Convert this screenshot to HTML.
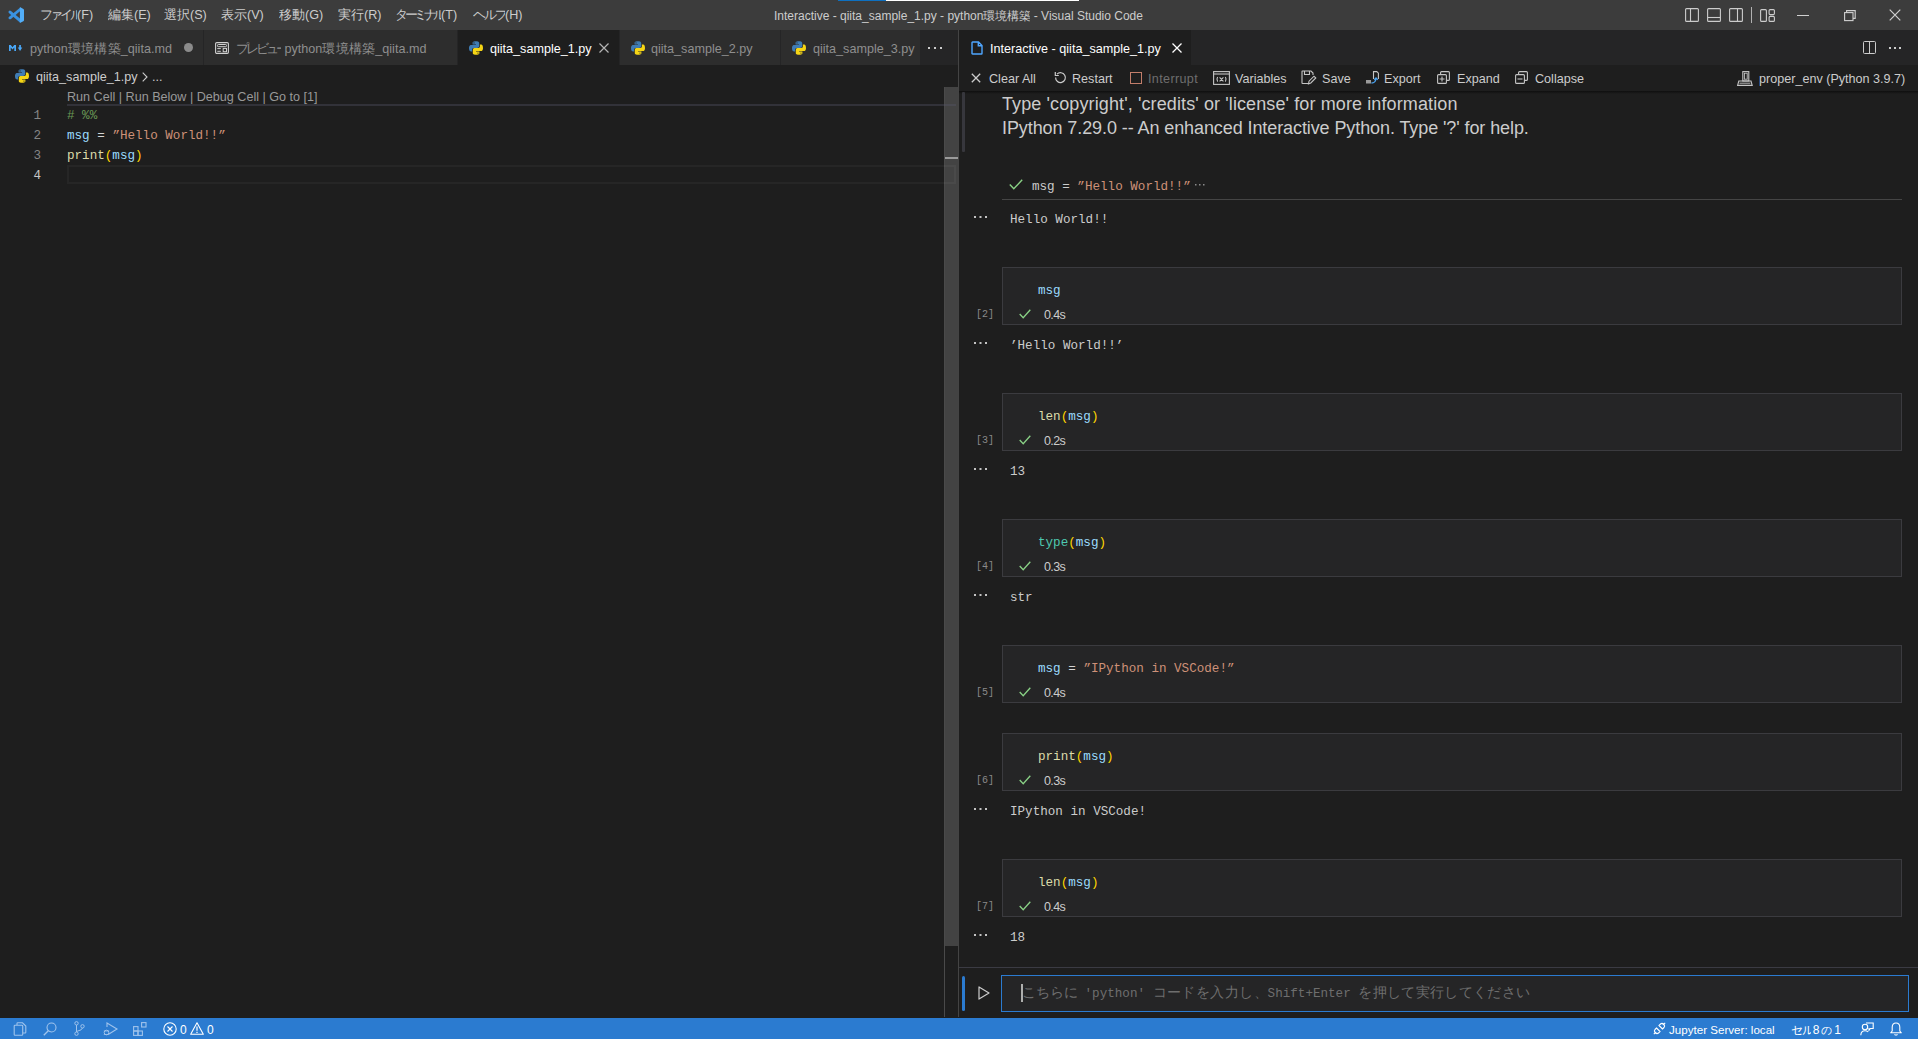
<!DOCTYPE html>
<html><head><meta charset="utf-8">
<style>
*{box-sizing:border-box}
html,body{margin:0;padding:0}
body{width:1918px;height:1039px;overflow:hidden;position:relative;background:#1e1e1e;font-family:"Liberation Sans",sans-serif;color:#cccccc}
.a{position:absolute;white-space:nowrap}
svg{position:absolute;overflow:visible}
.j{display:inline-block;overflow:hidden;vertical-align:top;white-space:normal;word-break:keep-all;text-align:justify;text-align-last:justify}
.menu{top:8px;font-size:12.6px;color:#cccccc;line-height:14px;height:14px}
.tab{top:30px;height:35px;background:#2d2d2d}
.tabtxt{top:42px;font-size:12.6px;line-height:14px;color:#8f8f8f}
#status{left:0;top:1018px;width:1918px;height:21px;background:#2b7bd0}
.st{top:1023px;font-size:12px;line-height:14px;color:#ffffff}
.ln{font-family:"Liberation Mono",monospace;font-size:12.6px;color:#858585;text-align:right;width:30px;left:11px;line-height:20px}
.code{font-family:"Liberation Mono",monospace;font-size:12.6px;line-height:20px;color:#d4d4d4}
.v{color:#9cdcfe}.s{color:#ce9178}.f{color:#dcdcaa}.c{color:#6a9955}.b{color:#ffd700}.t{color:#4ec9b0}
.tb{top:72px;font-size:12.6px;line-height:14px;color:#cccccc}
.cell{left:1002px;width:900px;height:58px;background:#252526;border:1px solid #3b3b3f}
.cnum{left:976px;font-family:"Liberation Mono",monospace;font-size:10px;color:#8a8a8a;line-height:12px}
.dur{font-size:12.5px;letter-spacing:-0.6px;color:#cccccc;line-height:14px}
.out{left:1010px;font-family:"Liberation Mono",monospace;font-size:12.6px;line-height:16px;color:#cccccc}
</style></head>
<body>
<!-- ============ TITLE BAR ============ -->
<div class="a" style="left:0;top:0;width:1918px;height:30px;background:#3c3c3c"></div>
<div class="a" style="left:838px;top:0;width:48px;height:1px;background:#0e70c0"></div>
<div class="a" style="left:886px;top:0;width:193px;height:1px;background:#ffffff"></div>
<svg style="left:0;top:0" width="30" height="30" viewBox="0 0 30 30">
<path d="M20.2 7.4 L20.2 11 L11 18.9 Q9.8 19.8 8.9 18.8 L8.6 18.4 Q8.2 17.6 8.9 17 Z" fill="#3a92e0"/>
<path d="M20.2 22.8 L20.2 18.7 L11 11 Q9.8 10.1 8.9 11.1 L8.6 11.5 Q8.2 12.3 8.9 12.9 Z" fill="#3a92e0"/>
<path d="M19.9 7.1 L23.4 8.9 Q24 9.2 24 9.9 L24 20.2 Q24 20.9 23.4 21.2 L19.9 23 Z" fill="#52aef8"/>
</svg>
<div class="a menu" style="left:40px"><span class="j" style="width:37px;letter-spacing:-3px">ファイル</span>(F)</div>
<div class="a menu" style="left:108px"><span class="j" style="width:26px">編集</span>(E)</div>
<div class="a menu" style="left:164px"><span class="j" style="width:26px">選択</span>(S)</div>
<div class="a menu" style="left:221px"><span class="j" style="width:26px">表示</span>(V)</div>
<div class="a menu" style="left:279px"><span class="j" style="width:26px">移動</span>(G)</div>
<div class="a menu" style="left:338px"><span class="j" style="width:26px">実行</span>(R)</div>
<div class="a menu" style="left:395px"><span class="j" style="width:46px;letter-spacing:-3.5px">ターミナル</span>(T)</div>
<div class="a menu" style="left:473px"><span class="j" style="width:32px;letter-spacing:-2px">ヘルプ</span>(H)</div>
<div class="a" style="left:774px;top:9px;font-size:12px;line-height:14px;height:14px;color:#cccccc">Interactive - qiita_sample_1.py - python<span class="j" style="width:47px;font-size:12px">環境構築</span> - Visual Studio Code</div>
<!-- layout icons -->
<svg style="left:1685px;top:8px" width="14" height="14" viewBox="0 0 14 14"><rect x="0.6" y="0.6" width="12.8" height="12.8" rx="1" fill="none" stroke="#cccccc" stroke-width="1.1"/><line x1="5.5" y1="1" x2="5.5" y2="13" stroke="#cccccc" stroke-width="1.1"/></svg>
<svg style="left:1707px;top:8px" width="14" height="14" viewBox="0 0 14 14"><rect x="0.6" y="0.6" width="12.8" height="12.8" rx="1" fill="none" stroke="#cccccc" stroke-width="1.1"/><line x1="1" y1="9.5" x2="13" y2="9.5" stroke="#cccccc" stroke-width="1.1"/></svg>
<svg style="left:1729px;top:8px" width="14" height="14" viewBox="0 0 14 14"><rect x="0.6" y="0.6" width="12.8" height="12.8" rx="1" fill="none" stroke="#cccccc" stroke-width="1.1"/><line x1="8.5" y1="1" x2="8.5" y2="13" stroke="#cccccc" stroke-width="1.1"/></svg>
<div class="a" style="left:1751px;top:7px;width:1px;height:16px;background:#b0b0b0"></div>
<svg style="left:1760px;top:9px" width="15" height="13" viewBox="0 0 15 13"><rect x="0.6" y="0.6" width="5.8" height="11.8" rx="1" fill="none" stroke="#cccccc" stroke-width="1.1"/><rect x="9.1" y="0.6" width="5.3" height="5" rx="1" fill="none" stroke="#cccccc" stroke-width="1.1"/><rect x="9.1" y="7.4" width="5.3" height="5" rx="1" fill="none" stroke="#cccccc" stroke-width="1.1"/></svg>
<div class="a" style="left:1797px;top:15px;width:12px;height:1px;background:#d0d0d0"></div>
<svg style="left:1844px;top:10px" width="12" height="11" viewBox="0 0 12 11"><rect x="0.6" y="2.6" width="8.4" height="8" fill="none" stroke="#d0d0d0" stroke-width="1.1"/><path d="M2.6 2.6 V0.6 H11.2 V8.4 H9" fill="none" stroke="#d0d0d0" stroke-width="1.1"/></svg>
<svg style="left:1889px;top:9px" width="12" height="12" viewBox="0 0 12 12"><path d="M0.7 0.7 L11.3 11.3 M11.3 0.7 L0.7 11.3" stroke="#d0d0d0" stroke-width="1.2"/></svg>

<!-- ============ LEFT TAB BAR ============ -->
<div class="a" style="left:0;top:30px;width:958px;height:35px;background:#252526"></div>
<div class="a tab" style="left:0;width:203px"></div>
<div class="a tab" style="left:204px;width:253px"></div>
<div class="a tab" style="left:458px;width:161px;background:#1e1e1e"></div>
<div class="a tab" style="left:620px;width:160px"></div>
<div class="a tab" style="left:781px;width:139px"></div>
<!-- tab1 md -->
<svg style="left:9px;top:45px" width="14" height="6" viewBox="0 0 14 6"><path d="M0 6 V0 H1.8 L3.5 2.2 L5.2 0 H7 V6 H5.3 V2.6 L3.5 4.6 L1.7 2.6 V6 Z" fill="#4aa8f8"/><path d="M10.2 0 H11.9 V2.6 H13.3 L11.05 6 L8.8 2.6 H10.2 Z" fill="#4aa8f8"/></svg>
<div class="a tabtxt" style="left:30px">python<span class="j" style="width:53px">環境構築</span>_qiita.md</div>
<div class="a" style="left:184px;top:43px;width:9px;height:9px;border-radius:50%;background:#8b8b8b"></div>
<!-- tab2 preview -->
<svg style="left:215px;top:42px" width="14" height="12" viewBox="0 0 14 12"><rect x="0.6" y="0.6" width="12.8" height="10.8" rx="1.2" fill="none" stroke="#d0d0d0" stroke-width="1.1"/><rect x="2.5" y="2.5" width="9" height="2.2" rx="0.8" fill="none" stroke="#d0d0d0" stroke-width="1"/><path d="M2.3 6.6 H5.8 M2.3 9.3 H5.8" stroke="#d0d0d0" stroke-width="1"/><rect x="8.2" y="6.4" width="3.3" height="3.3" fill="none" stroke="#d0d0d0" stroke-width="1"/></svg>
<div class="a tabtxt" style="left:236px"><span class="j" style="width:45px;letter-spacing:-3px">プレビュー</span> python<span class="j" style="width:53px">環境構築</span>_qiita.md</div>
<!-- tab3 active -->
<svg class="py" style="left:469px;top:41px" width="14" height="14" viewBox="0 0 14 14"><use href="#pyico"/></svg>
<div class="a tabtxt" style="left:490px;color:#ffffff">qiita_sample_1.py</div>
<svg style="left:599px;top:43px" width="10" height="10" viewBox="0 0 10 10"><path d="M0.5 0.5 L9.5 9.5 M9.5 0.5 L0.5 9.5" stroke="#b4b4b4" stroke-width="1.2"/></svg>
<!-- tab4 -->
<svg style="left:631px;top:41px" width="14" height="14" viewBox="0 0 14 14"><use href="#pyico"/></svg>
<div class="a tabtxt" style="left:651px">qiita_sample_2.py</div>
<!-- tab5 -->
<svg style="left:792px;top:41px" width="14" height="14" viewBox="0 0 14 14"><use href="#pyico"/></svg>
<div class="a tabtxt" style="left:813px">qiita_sample_3.py</div>
<svg style="left:928px;top:47px" width="14" height="3" viewBox="0 0 14 3"><rect x="0" y="0" width="2" height="2" fill="#cccccc"/><rect x="6" y="0" width="2" height="2" fill="#cccccc"/><rect x="12" y="0" width="2" height="2" fill="#cccccc"/></svg>

<svg width="0" height="0" style="left:0;top:0"><defs>
<g id="pyico">
<path d="M6.9 0.3 C3.4 0.3 3.6 1.8 3.6 1.8 L3.6 3.4 L7 3.4 L7 3.9 L2.2 3.9 C2.2 3.9 0 3.6 0 7.1 C0 10.6 1.9 10.5 1.9 10.5 L3.1 10.5 L3.1 8.8 C3.1 8.8 3 6.9 5 6.9 L8.3 6.9 C8.3 6.9 10.2 6.9 10.2 5.1 L10.2 2.1 C10.2 2.1 10.5 0.3 6.9 0.3 Z M5 1.3 C5.4 1.3 5.6 1.6 5.6 1.9 C5.6 2.3 5.4 2.5 5 2.5 C4.7 2.5 4.4 2.3 4.4 1.9 C4.4 1.6 4.7 1.3 5 1.3 Z" fill="#3f7cb4"/>
<path d="M7.1 13.7 C10.6 13.7 10.4 12.2 10.4 12.2 L10.4 10.6 L7 10.6 L7 10.1 L11.8 10.1 C11.8 10.1 14 10.4 14 6.9 C14 3.4 12.1 3.5 12.1 3.5 L10.9 3.5 L10.9 5.2 C10.9 5.2 11 7.1 9 7.1 L5.7 7.1 C5.7 7.1 3.8 7.1 3.8 8.9 L3.8 11.9 C3.8 11.9 3.5 13.7 7.1 13.7 Z M9 12.7 C8.6 12.7 8.4 12.4 8.4 12.1 C8.4 11.7 8.6 11.5 9 11.5 C9.3 11.5 9.6 11.7 9.6 12.1 C9.6 12.4 9.3 12.7 9 12.7 Z" fill="#f5d515"/>
</g></defs></svg>

<!-- ============ LEFT EDITOR ============ -->
<svg style="left:15px;top:69px" width="14" height="14" viewBox="0 0 14 14"><use href="#pyico"/></svg>
<div class="a" style="left:36px;top:70px;font-size:12.6px;line-height:14px;color:#cccccc">qiita_sample_1.py</div>
<svg style="left:142px;top:72px" width="6" height="10" viewBox="0 0 6 10"><path d="M0.7 0.7 L5 5 L0.7 9.3" fill="none" stroke="#cccccc" stroke-width="1.1"/></svg>
<div class="a" style="left:152px;top:70px;font-size:12.6px;line-height:14px;color:#cccccc">...</div>
<div class="a" style="left:67px;top:90px;font-size:12.6px;line-height:14px;color:#999999">Run Cell | Run Below | Debug Cell | Go to [1]</div>

<div class="a ln" style="top:106px">1</div>
<div class="a ln" style="top:126px">2</div>
<div class="a ln" style="top:146px">3</div>
<div class="a ln" style="top:166px;color:#c6c6c6">4</div>
<div class="a code" style="left:67px;top:106px"><span class="c"># %%</span></div>
<div class="a code" style="left:67px;top:126px"><span class="v">msg</span> = <span class="s">”Hello World!!”</span></div>
<div class="a code" style="left:67px;top:146px"><span class="f">print</span><span class="b">(</span><span class="v">msg</span><span class="b">)</span></div>
<!-- scrollbar -->
<div class="a" style="left:944px;top:87px;width:1px;height:930px;background:#4a4a4a"></div>
<div class="a" style="left:945px;top:87px;width:13px;height:859px;background:#434343"></div>
<div class="a" style="left:945px;top:157px;width:13px;height:2px;background:#9a9a9a"></div>
<div class="a" style="left:67px;top:104px;width:889px;height:2px;background:rgba(90,90,110,0.35)"></div>
<div class="a" style="left:67px;top:165px;width:889px;height:19px;border:2px solid rgba(255,255,255,0.04)"></div>
<div class="a" style="left:958px;top:30px;width:1px;height:987px;background:#444444"></div>

<!-- ============ RIGHT GROUP ============ -->
<div class="a" style="left:959px;top:30px;width:959px;height:35px;background:#252526"></div>
<div class="a" style="left:959px;top:30px;width:232px;height:35px;background:#1e1e1e"></div>
<svg style="left:971px;top:41px" width="12" height="14" viewBox="0 0 12 14"><path d="M1.5 1 H7.5 L11 4.5 V12.5 Q11 13 10.5 13 H1.5 Q1 13 1 12.5 V1.5 Q1 1 1.5 1 Z M7.3 1 V4.7 H11" fill="none" stroke="#4fa6ff" stroke-width="1.4"/></svg>
<div class="a tabtxt" style="left:990px;color:#ffffff">Interactive - qiita_sample_1.py</div>
<svg style="left:1172px;top:43px" width="10" height="10" viewBox="0 0 10 10"><path d="M0.5 0.5 L9.5 9.5 M9.5 0.5 L0.5 9.5" stroke="#ffffff" stroke-width="1.3"/></svg>
<svg style="left:1863px;top:41px" width="13" height="13" viewBox="0 0 13 13"><rect x="0.5" y="0.5" width="12" height="12" rx="1" fill="none" stroke="#cccccc"/><line x1="6.5" y1="1" x2="6.5" y2="12" stroke="#cccccc"/></svg>
<svg style="left:1889px;top:47px" width="12" height="2" viewBox="0 0 12 2"><rect x="0" y="0" width="2" height="2" fill="#cccccc"/><rect x="5" y="0" width="2" height="2" fill="#cccccc"/><rect x="10" y="0" width="2" height="2" fill="#cccccc"/></svg>

<!-- toolbar -->
<div class="a" style="left:959px;top:91px;width:959px;height:3px;background:linear-gradient(#0f0f0f,rgba(30,30,30,0))"></div>
<svg style="left:971px;top:73px" width="10" height="10" viewBox="0 0 10 10"><path d="M0.8 0.8 L9.2 9.2 M9.2 0.8 L0.8 9.2" stroke="#cccccc" stroke-width="1.3"/></svg>
<div class="a tb" style="left:989px">Clear All</div>
<svg style="left:1054px;top:71px" width="13" height="13" viewBox="0 0 13 13"><path d="M3 3.2 A4.9 4.9 0 1 1 1.6 6.5" fill="none" stroke="#cccccc" stroke-width="1.2"/><path d="M1.3 1 V4.5 H4.8" fill="none" stroke="#cccccc" stroke-width="1.2"/></svg>
<div class="a tb" style="left:1072px">Restart</div>
<div class="a" style="left:1130px;top:72px;width:12px;height:12px;border:1px solid #c27d6a"></div>
<div class="a tb" style="left:1148px;color:#6e6e6e;letter-spacing:0.35px">Interrupt</div>
<svg style="left:1213px;top:71px" width="17" height="14" viewBox="0 0 17 14"><rect x="0.6" y="0.6" width="15.8" height="12.8" fill="none" stroke="#c5c5c5" stroke-width="1.1"/><line x1="1" y1="3" x2="16" y2="3" stroke="#c5c5c5" stroke-width="1.1"/><path d="M4.6 6 Q3.2 8.3 4.6 10.6 M12.4 6 Q13.8 8.3 12.4 10.6 M6.6 6.3 L10.4 10.3 M10.4 6.3 L6.6 10.3" fill="none" stroke="#c5c5c5" stroke-width="1.1"/></svg>
<div class="a tb" style="left:1235px">Variables</div>
<svg style="left:1301px;top:70px" width="15" height="15" viewBox="0 0 15 15"><path d="M9 13.5 H1.5 Q1 13.5 1 13 V1.5 Q1 1 1.5 1 H10 L12 3 V5" fill="none" stroke="#c5c5c5" stroke-width="1.1"/><path d="M3.5 1 V4.5 H8.5 V1" fill="none" stroke="#c5c5c5" stroke-width="1.1"/><path d="M7.5 13.8 L8 11.2 L13 6.2 L14.8 8 L9.8 13 Z" fill="none" stroke="#c5c5c5" stroke-width="1.1"/></svg>
<div class="a tb" style="left:1322px">Save</div>
<svg style="left:1366px;top:71px" width="13" height="14" viewBox="0 0 13 14"><rect x="0" y="9" width="5" height="3.5" fill="#9a9a9a"/><path d="M7.5 8 V0.6 H10.8 L12.4 2.2 V8" fill="none" stroke="#c5c5c5" stroke-width="1.1"/><path d="M5.5 12 Q9.5 12 10 7.5 M8.3 8.8 L10 7 L11.7 8.8" fill="none" stroke="#4aa3f0" stroke-width="1.3"/></svg>
<div class="a tb" style="left:1384px">Export</div>
<svg style="left:1437px;top:71px" width="13" height="13" viewBox="0 0 13 13"><rect x="0.6" y="3.6" width="8.8" height="8.8" rx="1" fill="none" stroke="#c5c5c5" stroke-width="1.1"/><path d="M3.6 3.6 V1.6 Q3.6 0.6 4.6 0.6 H11.4 Q12.4 0.6 12.4 1.6 V8.4 Q12.4 9.4 11.4 9.4 H9.4" fill="none" stroke="#c5c5c5" stroke-width="1.1"/><path d="M5 5.5 V10.5 M2.5 8 H7.5" stroke="#c5c5c5" stroke-width="1.1"/></svg>
<div class="a tb" style="left:1457px">Expand</div>
<svg style="left:1515px;top:71px" width="13" height="13" viewBox="0 0 13 13"><rect x="0.6" y="3.6" width="8.8" height="8.8" rx="1" fill="none" stroke="#c5c5c5" stroke-width="1.1"/><path d="M3.6 3.6 V1.6 Q3.6 0.6 4.6 0.6 H11.4 Q12.4 0.6 12.4 1.6 V8.4 Q12.4 9.4 11.4 9.4 H9.4" fill="none" stroke="#c5c5c5" stroke-width="1.1"/><path d="M2.5 8 H7.5" stroke="#c5c5c5" stroke-width="1.1"/></svg>
<div class="a tb" style="left:1535px">Collapse</div>
<svg style="left:1737px;top:71px" width="16" height="15" viewBox="0 0 16 15"><rect x="5.8" y="0.6" width="6" height="9.4" fill="none" stroke="#c5c5c5" stroke-width="1.1"/><rect x="7.4" y="2.2" width="2.8" height="6" fill="none" stroke="#c5c5c5" stroke-width="0.9"/><path d="M3.6 10 H14 L15.2 14.4 H0.6 L1.8 10 Z" fill="none" stroke="#c5c5c5" stroke-width="1.1"/><line x1="2.5" y1="12.2" x2="13.3" y2="12.2" stroke="#c5c5c5" stroke-width="0.9"/></svg>
<div class="a tb" style="left:1759px">proper_env (Python 3.9.7)</div>


<!-- ============ INTERACTIVE CONTENT ============ -->
<div class="a" style="left:962px;top:92px;width:3px;height:60px;border-radius:1px;background:#37373d"></div>
<div class="a" style="left:1002px;top:92px;font-size:18px;line-height:24px;color:#cccccc;letter-spacing:0.11px">Type 'copyright', 'credits' or 'license' for more information</div>
<div class="a" style="left:1002px;top:116px;font-size:18px;line-height:24px;color:#cccccc;letter-spacing:-0.09px">IPython 7.29.0 -- An enhanced Interactive Python. Type '?' for help.</div>

<!-- cell 1 collapsed -->
<svg style="left:1009px;top:179px" width="14" height="11" viewBox="0 0 14 11"><path d="M0.8 5.5 L4.8 9.8 L13.2 0.8" fill="none" stroke="#89d185" stroke-width="1.4"/></svg>
<div class="a code" style="left:1032px;top:177px;line-height:20px"><span style="color:#cccccc">msg = </span><span class="s">”Hello World!!”</span></div>
<svg style="left:1195px;top:184px" width="10" height="2" viewBox="0 0 10 2"><rect x="0" y="0" width="1.5" height="1.5" fill="#8a8a8a"/><rect x="4" y="0" width="1.5" height="1.5" fill="#8a8a8a"/><rect x="8" y="0" width="1.5" height="1.5" fill="#8a8a8a"/></svg>
<div class="a" style="left:1002px;top:199px;width:900px;height:1px;background:#454545"></div>
<svg style="left:974px;top:216px" width="13" height="3" viewBox="0 0 13 3"><rect x="0" y="0" width="2" height="2" fill="#c4c4c4"/><rect x="5.5" y="0" width="2" height="2" fill="#c4c4c4"/><rect x="11" y="0" width="2" height="2" fill="#c4c4c4"/></svg>
<div class="a out" style="top:212px">Hello World!!</div>

<div class="a cell" style="top:267px"></div>
<div class="a code" style="left:1038px;top:281px"><span class="v">msg</span></div>
<div class="a cnum" style="top:309px">[2]</div>
<svg style="left:1019px;top:309px" width="12" height="10" viewBox="0 0 12 10"><path d="M0.7 5 L4.2 8.8 L11.3 0.8" fill="none" stroke="#89d185" stroke-width="1.3"/></svg>
<div class="a dur" style="left:1044px;top:308px">0.4s</div>
<svg style="left:974px;top:342px" width="13" height="3" viewBox="0 0 13 3"><rect x="0" y="0" width="2" height="2" fill="#c4c4c4"/><rect x="5.5" y="0" width="2" height="2" fill="#c4c4c4"/><rect x="11" y="0" width="2" height="2" fill="#c4c4c4"/></svg>
<div class="a out" style="top:338px">’Hello World!!’</div>

<div class="a cell" style="top:393px"></div>
<div class="a code" style="left:1038px;top:407px"><span class="f">len</span><span class="b">(</span><span class="v">msg</span><span class="b">)</span></div>
<div class="a cnum" style="top:435px">[3]</div>
<svg style="left:1019px;top:435px" width="12" height="10" viewBox="0 0 12 10"><path d="M0.7 5 L4.2 8.8 L11.3 0.8" fill="none" stroke="#89d185" stroke-width="1.3"/></svg>
<div class="a dur" style="left:1044px;top:434px">0.2s</div>
<svg style="left:974px;top:468px" width="13" height="3" viewBox="0 0 13 3"><rect x="0" y="0" width="2" height="2" fill="#c4c4c4"/><rect x="5.5" y="0" width="2" height="2" fill="#c4c4c4"/><rect x="11" y="0" width="2" height="2" fill="#c4c4c4"/></svg>
<div class="a out" style="top:464px">13</div>

<div class="a cell" style="top:519px"></div>
<div class="a code" style="left:1038px;top:533px"><span class="t">type</span><span class="b">(</span><span class="v">msg</span><span class="b">)</span></div>
<div class="a cnum" style="top:561px">[4]</div>
<svg style="left:1019px;top:561px" width="12" height="10" viewBox="0 0 12 10"><path d="M0.7 5 L4.2 8.8 L11.3 0.8" fill="none" stroke="#89d185" stroke-width="1.3"/></svg>
<div class="a dur" style="left:1044px;top:560px">0.3s</div>
<svg style="left:974px;top:594px" width="13" height="3" viewBox="0 0 13 3"><rect x="0" y="0" width="2" height="2" fill="#c4c4c4"/><rect x="5.5" y="0" width="2" height="2" fill="#c4c4c4"/><rect x="11" y="0" width="2" height="2" fill="#c4c4c4"/></svg>
<div class="a out" style="top:590px">str</div>

<div class="a cell" style="top:645px"></div>
<div class="a code" style="left:1038px;top:659px"><span class="v">msg</span> = <span class="s">”IPython in VSCode!”</span></div>
<div class="a cnum" style="top:687px">[5]</div>
<svg style="left:1019px;top:687px" width="12" height="10" viewBox="0 0 12 10"><path d="M0.7 5 L4.2 8.8 L11.3 0.8" fill="none" stroke="#89d185" stroke-width="1.3"/></svg>
<div class="a dur" style="left:1044px;top:686px">0.4s</div>

<div class="a cell" style="top:733px"></div>
<div class="a code" style="left:1038px;top:747px"><span class="f">print</span><span class="b">(</span><span class="v">msg</span><span class="b">)</span></div>
<div class="a cnum" style="top:775px">[6]</div>
<svg style="left:1019px;top:775px" width="12" height="10" viewBox="0 0 12 10"><path d="M0.7 5 L4.2 8.8 L11.3 0.8" fill="none" stroke="#89d185" stroke-width="1.3"/></svg>
<div class="a dur" style="left:1044px;top:774px">0.3s</div>
<svg style="left:974px;top:808px" width="13" height="3" viewBox="0 0 13 3"><rect x="0" y="0" width="2" height="2" fill="#c4c4c4"/><rect x="5.5" y="0" width="2" height="2" fill="#c4c4c4"/><rect x="11" y="0" width="2" height="2" fill="#c4c4c4"/></svg>
<div class="a out" style="top:804px">IPython in VSCode!</div>

<div class="a cell" style="top:859px"></div>
<div class="a code" style="left:1038px;top:873px"><span class="f">len</span><span class="b">(</span><span class="v">msg</span><span class="b">)</span></div>
<div class="a cnum" style="top:901px">[7]</div>
<svg style="left:1019px;top:901px" width="12" height="10" viewBox="0 0 12 10"><path d="M0.7 5 L4.2 8.8 L11.3 0.8" fill="none" stroke="#89d185" stroke-width="1.3"/></svg>
<div class="a dur" style="left:1044px;top:900px">0.4s</div>
<svg style="left:974px;top:934px" width="13" height="3" viewBox="0 0 13 3"><rect x="0" y="0" width="2" height="2" fill="#c4c4c4"/><rect x="5.5" y="0" width="2" height="2" fill="#c4c4c4"/><rect x="11" y="0" width="2" height="2" fill="#c4c4c4"/></svg>
<div class="a out" style="top:930px">18</div>

<!-- input area -->
<div class="a" style="left:959px;top:967px;width:959px;height:1px;background:#3b3b43"></div>
<div class="a" style="left:962px;top:976px;width:3px;height:35px;border-radius:2px;background:#2b7bd0"></div>
<svg style="left:978px;top:986px" width="12" height="14" viewBox="0 0 12 14"><path d="M1 0.9 L11 7 L1 13.1 Z" fill="none" stroke="#cccccc" stroke-width="1.2" stroke-linejoin="round"/></svg>
<div class="a" style="left:1001px;top:975px;width:908px;height:37px;background:#252526;border:1px solid #2b7bd0"></div>
<div class="a" style="left:1021px;top:984px;width:2px;height:18px;background:#aeafad"></div>
<div class="a" style="left:1022px;top:985px;font-family:'Liberation Mono',monospace;font-size:12.6px;line-height:18px;color:#6e6e6e"><span class="j" style="width:55px;font-size:13.5px">こちらに</span> <span>'python'</span> <span class="j" style="width:115px;font-size:13.5px">コードを入力し、</span><span>Shift+Enter</span> <span class="j" style="width:172px;font-size:13.5px;letter-spacing:0.1px">を押して実行してください</span></div>

<!-- ============ STATUS BAR ============ -->
<div class="a" id="status"></div>

<!-- status items -->
<svg style="left:13px;top:1022px" width="14" height="14" viewBox="0 0 14 14"><path d="M4 3 V1.5 Q4 0.8 4.7 0.8 H9.5 L12.8 4 V10.3 Q12.8 11 12.1 11 H10" fill="none" stroke="#9fc3ec" stroke-width="1.1"/><rect x="1.2" y="3.3" width="8.5" height="10" rx="0.8" fill="none" stroke="#9fc3ec" stroke-width="1.1"/></svg>
<svg style="left:43px;top:1022px" width="14" height="14" viewBox="0 0 14 14"><circle cx="8.5" cy="5.5" r="4.5" fill="none" stroke="#9fc3ec" stroke-width="1.1"/><path d="M5.3 8.7 L0.8 13.2" stroke="#9fc3ec" stroke-width="1.3"/></svg>
<svg style="left:74px;top:1021px" width="11" height="15" viewBox="0 0 11 15"><circle cx="2.5" cy="2.3" r="1.7" fill="none" stroke="#9fc3ec" stroke-width="1"/><circle cx="2.5" cy="12.7" r="1.7" fill="none" stroke="#9fc3ec" stroke-width="1"/><circle cx="8.5" cy="5.3" r="1.7" fill="none" stroke="#9fc3ec" stroke-width="1"/><path d="M2.5 4 V11 M8.5 7 Q8.5 9 2.5 10.5" fill="none" stroke="#9fc3ec" stroke-width="1"/></svg>
<svg style="left:103px;top:1022px" width="15" height="14" viewBox="0 0 15 14"><path d="M4 5 V1 L14 7 L6 12" fill="none" stroke="#9fc3ec" stroke-width="1.1"/><circle cx="3.5" cy="10.5" r="2.3" fill="none" stroke="#9fc3ec" stroke-width="1"/><path d="M0.8 9 H6.2 M0.8 12.5 H6.2" stroke="#9fc3ec" stroke-width="0.8"/></svg>
<svg style="left:133px;top:1022px" width="14" height="14" viewBox="0 0 14 14"><rect x="0.6" y="4.6" width="4.4" height="4.4" fill="none" stroke="#9fc3ec" stroke-width="1.1"/><rect x="0.6" y="9" width="4.4" height="4.4" fill="none" stroke="#9fc3ec" stroke-width="1.1"/><rect x="5" y="9" width="4.4" height="4.4" fill="none" stroke="#9fc3ec" stroke-width="1.1"/><rect x="8.6" y="0.6" width="4.4" height="4.4" fill="none" stroke="#9fc3ec" stroke-width="1.1"/></svg>
<svg style="left:163px;top:1022px" width="14" height="14" viewBox="0 0 14 14"><circle cx="7" cy="7" r="6.2" fill="none" stroke="#ffffff" stroke-width="1.1"/><path d="M4.5 4.5 L9.5 9.5 M9.5 4.5 L4.5 9.5" stroke="#ffffff" stroke-width="1.1"/></svg>
<div class="a st" style="left:180px">0</div>
<svg style="left:190px;top:1022px" width="14" height="13" viewBox="0 0 14 13"><path d="M7 0.8 L13.3 12.3 H0.7 Z" fill="none" stroke="#ffffff" stroke-width="1.1" stroke-linejoin="round"/><path d="M7 4.5 V8.8 M7 9.8 V11" stroke="#ffffff" stroke-width="1.2"/></svg>
<div class="a st" style="left:207px">0</div>

<svg style="left:1653px;top:1022px" width="13" height="13" viewBox="0 0 13 13"><path d="M0.8 12.2 L3.2 9.8 M9.8 3.2 L12.2 0.8" stroke="#ffffff" stroke-width="1.1"/><path d="M3.5 6 L7 9.5 L5.5 11 Q4 12.3 2.5 11 L2 10.5 Q0.7 9 2 7.5 Z M9.5 7 L6 3.5 L7.5 2 Q9 0.7 10.5 2 L11 2.5 Q12.3 4 11 5.5 Z" fill="none" stroke="#ffffff" stroke-width="1.1"/></svg>
<div class="a st" style="left:1669px;font-size:11.6px">Jupyter Server: local</div>
<div class="a st" style="left:1791px;word-spacing:-1.5px"><span class="j" style="width:20px;letter-spacing:-2.5px">セル</span> 8 <span class="j" style="width:11px;font-size:11px">の</span> 1</div>
<svg style="left:1860px;top:1022px" width="14" height="14" viewBox="0 0 14 14"><circle cx="5" cy="5" r="2.7" fill="none" stroke="#ffffff" stroke-width="1.1"/><path d="M0.8 13.2 Q1 8.8 5 8.8 Q7 8.8 8 10" fill="none" stroke="#ffffff" stroke-width="1.1"/><path d="M6 1 H13.2 V6.5 H10.5 L9 8.3 V6.5 H8.5" fill="none" stroke="#ffffff" stroke-width="1.1"/></svg>
<svg style="left:1890px;top:1022px" width="12" height="14" viewBox="0 0 12 14"><path d="M6 1 Q9.8 1 9.8 5.2 V9 L11.3 10.8 H0.7 L2.2 9 V5.2 Q2.2 1 6 1 Z" fill="none" stroke="#ffffff" stroke-width="1.1" stroke-linejoin="round"/><path d="M4.5 12.3 Q6 13.8 7.5 12.3" fill="none" stroke="#ffffff" stroke-width="1.1"/></svg>

</body></html>
